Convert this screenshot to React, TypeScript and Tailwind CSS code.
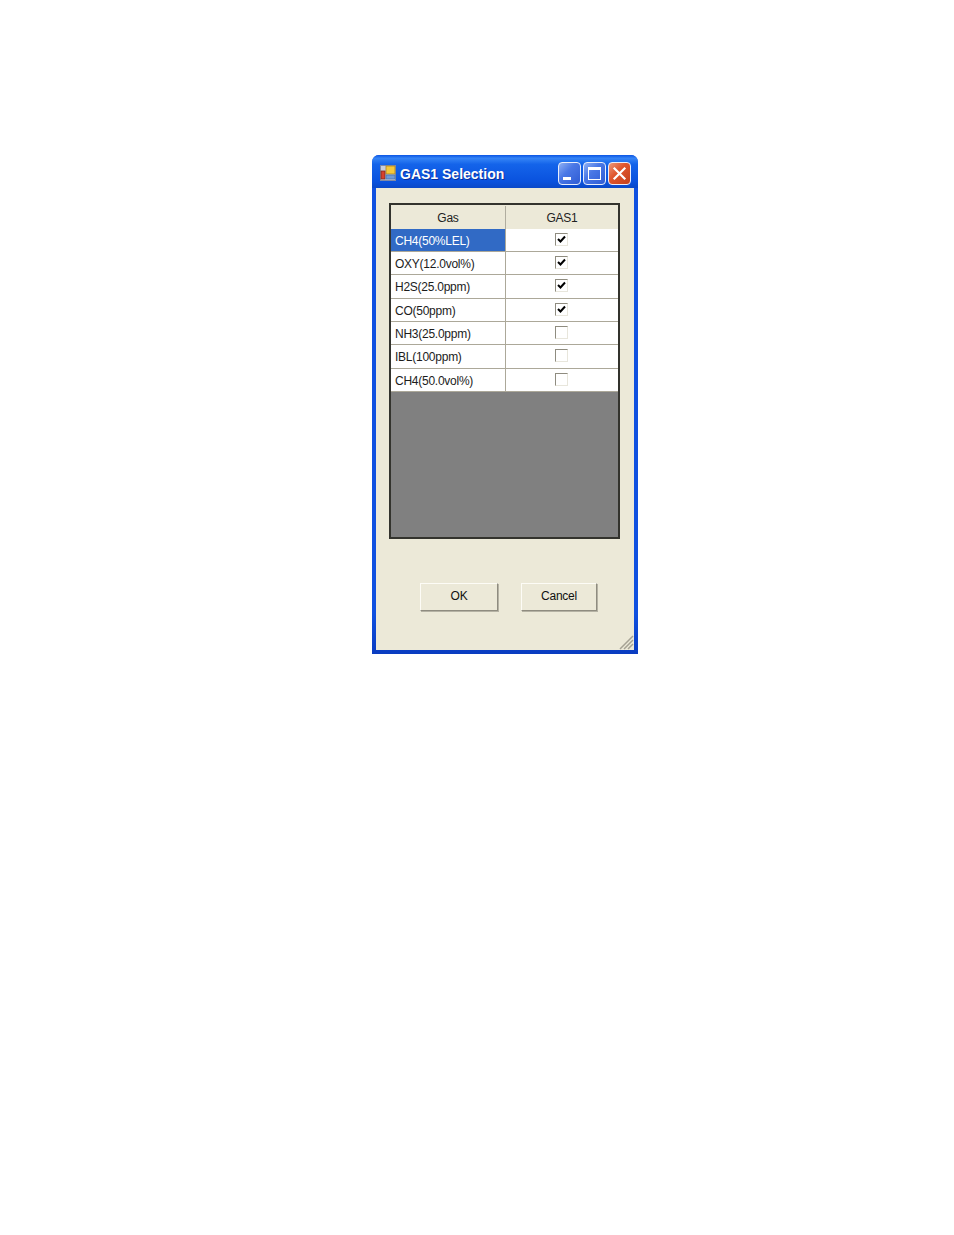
const rows = [
  { name: 'CH4(50%LEL)', checked: true, h: 'h-[23px]' },
  { name: 'OXY(12.0vol%)', checked: true, h: 'h-[23px]' },
  { name: 'H2S(25.0ppm)', checked: true, h: 'h-[24px]' },
  { name: 'CO(50ppm)', checked: true, h: 'h-[23px]' },
  { name: 'NH3(25.0ppm)', checked: false, h: 'h-[23px]' },
  { name: 'IBL(100ppm)', checked: false, h: 'h-[24px]' },
  { name: 'CH4(50.0vol%)', checked: false, h: 'h-[23px]' },
];

function AppIcon() {
  return (
    <svg width="16" height="16" viewBox="0 0 16 16" className="shrink-0 mt-[-2px]">
      <rect x="0.5" y="0.5" width="15" height="15" fill="#c9cfdc" stroke="#7f8aa6" />
      <rect x="6" y="1" width="9" height="8" fill="#f6c83a" stroke="#a9822a" strokeWidth="0.8" />
      <rect x="1" y="6" width="4" height="8" fill="#d8402c" stroke="#7e2a20" strokeWidth="0.8" />
      <rect x="6" y="10" width="9" height="4" fill="#6f9ad8" stroke="#4b74b0" strokeWidth="0.8" />
    </svg>
  );
}

function CaptionButton({ kind }: { kind: 'min' | 'max' | 'close' }) {
  const bg =
    kind === 'close'
      ? 'bg-[linear-gradient(135deg,#ec9a7c_0%,#e0572f_40%,#c4401c_100%)]'
      : 'bg-[linear-gradient(135deg,#8fb0f4_0%,#4a78e6_40%,#2f5cd4_100%)]';
  return (
    <div className={`w-[23px] h-[23px] rounded-[4px] border border-[#e8eefc] flex items-center justify-center ${bg}`}>
      <svg width="21" height="21" viewBox="0 0 21 21">
        {kind === 'min' && <rect x="4" y="14" width="8" height="3" fill="#fff" />}
        {kind === 'max' && (
          <>
            <rect x="4.5" y="4.5" width="12" height="12" fill="none" stroke="#fff" />
            <rect x="4" y="4" width="13" height="3" fill="#fff" />
          </>
        )}
        {kind === 'close' && (
          <path d="M5.5 5.5 L15.5 15.5 M15.5 5.5 L5.5 15.5" stroke="#fff" strokeWidth="2.2" strokeLinecap="square" fill="none" />
        )}
      </svg>
    </div>
  );
}

function CheckBox({ checked }: { checked: boolean }) {
  return (
    <div className="w-[13px] h-[13px] border border-[#8f8c80] border-b-[#e8e6dc] border-r-[#e8e6dc] bg-white">
      {checked && (
        <svg width="11" height="11" viewBox="0 0 11 11">
          <path d="M2 5 L4.5 7.5 L9 2.5" stroke="#000" strokeWidth="2" fill="none" />
        </svg>
      )}
    </div>
  );
}

function XpButton({ label, width }: { label: string; width: string }) {
  return (
    <button
      className={`${width} h-[28px] bg-[#ece9d8] text-[12px] tracking-[-0.25px] text-[#111] pb-[2px] border border-[#fdfcf6] border-r-[#8f8c80] border-b-[#8f8c80] shadow-[1px_1px_0_#b5b2a4]`}
    >
      {label}
    </button>
  );
}

export default function App() {
  return (
    <div className="w-[954px] h-[1235px] bg-white pt-[155px] pl-[372px] font-['Liberation_Sans',sans-serif]">
      <div className="w-[266px] h-[499px] rounded-t-[7px] bg-[linear-gradient(180deg,#0f50e0_0%,#0f50e0_92%,#0a3cc0_100%)] flex flex-col">
        {/* title bar */}
        <div className="h-[33px] shrink-0 rounded-t-[7px] bg-[linear-gradient(180deg,#0a55e4_0%,#3584f6_10%,#1464ea_28%,#0a52de_80%,#0a48c8_100%)] flex items-center pl-[8px] pr-[7px] pt-[5px]">
          <AppIcon />
          <span className="ml-[4px] text-white font-bold text-[14px] [text-shadow:1px_1px_0_#0a2f9c]">
            GAS1 Selection
          </span>
          <div className="ml-auto flex gap-[2px] mt-[-2px]">
            <CaptionButton kind="min" />
            <CaptionButton kind="max" />
            <CaptionButton kind="close" />
          </div>
        </div>
        {/* client area */}
        <div className="relative mx-[4px] mb-[4px] flex-1 bg-[#ece9d8] pt-[15px] pl-[13px]">
          <div className="w-[231px] h-[336px] border-2 border-[#33332d] bg-[#808080] flex flex-col">
            <div className="flex h-[24px] shrink-0 bg-[#ece9d8] text-[12px] tracking-[-0.25px] text-[#222] pt-[1px]">
              <div className="w-[115px] flex items-center justify-center border-r border-[#b0ad9f]">Gas</div>
              <div className="flex-1 flex items-center justify-center">GAS1</div>
            </div>
            {rows.map((row, i) => (
              <div key={row.name} className={`flex ${row.h} shrink-0 bg-white text-[12px] tracking-[-0.25px] text-[#1c1c1c] border-b border-[#aca899]`}>
                <div
                  className={`w-[115px] flex items-center pl-[4px] pt-[1px] border-r border-[#aca899] ${
                    i === 0 ? 'bg-[#316ac5] text-white' : ''
                  }`}
                >
                  {row.name}
                </div>
                <div className="flex-1 flex justify-center pt-[4px] pr-[1px]">
                  <CheckBox checked={row.checked} />
                </div>
              </div>
            ))}
          </div>
          <div className="flex mt-[44px] ml-[31px] gap-[23px]">
            <XpButton label="OK" width="w-[78px]" />
            <XpButton label="Cancel" width="w-[76px]" />
          </div>
          {/* resize grip */}
          <svg width="16" height="16" viewBox="0 0 16 16" className="absolute right-0 bottom-0">
            <path d="M15 2 L2 15 M15 6 L6 15 M15 10 L10 15" stroke="#a5a294" strokeWidth="1.5" fill="none" />
          </svg>
        </div>
      </div>
    </div>
  );
}
